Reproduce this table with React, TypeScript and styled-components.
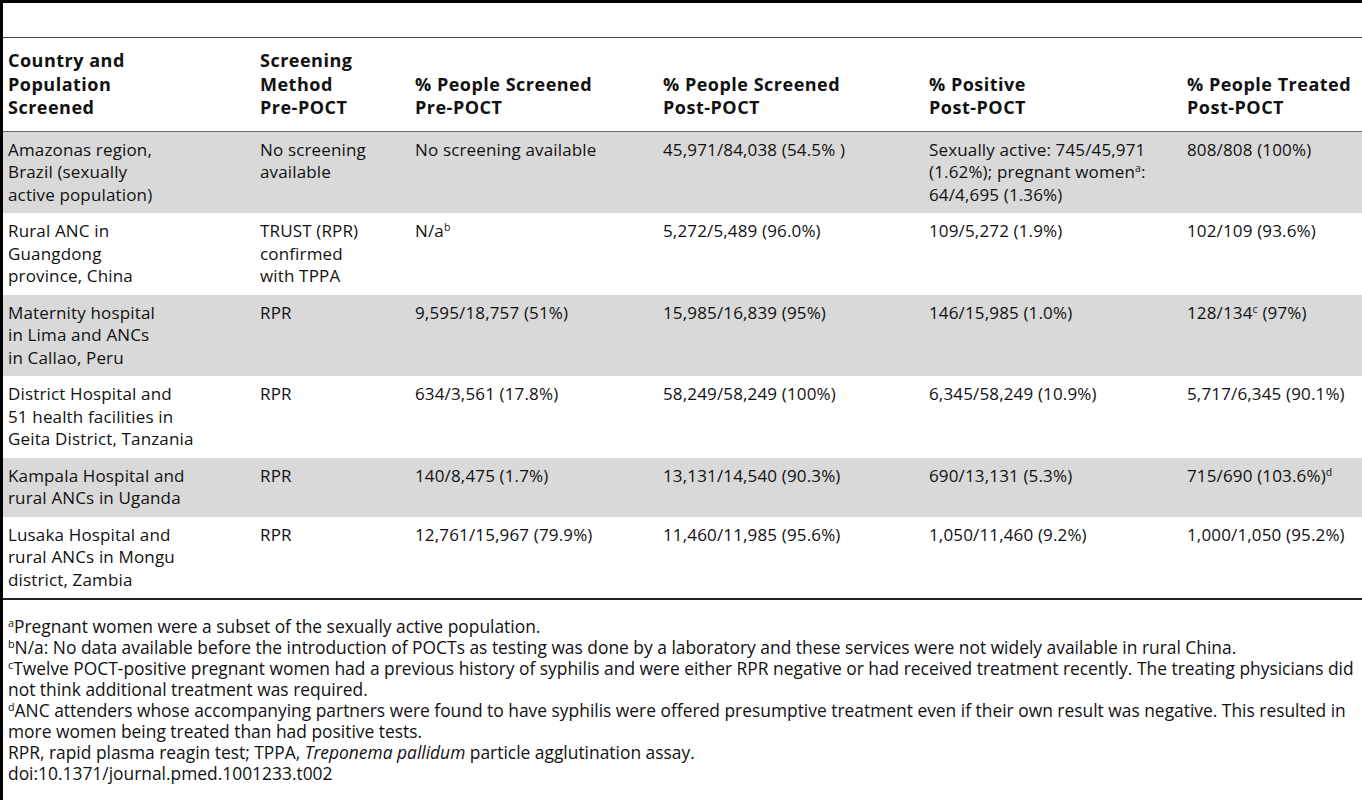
import React from "react"
import styled, { createGlobalStyle } from "styled-components"

//------------------------------
// Styles
//------------------------------
const GlobalStyle = createGlobalStyle`
  html, body {
    margin: 0;
    padding: 0;
    background: #fff;
  }
  body {
    font-family: "Open Sans", "Noto Sans", sans-serif;
    color: #111;
  }
`

const Page = styled.div`
  display: flex;
  flex-direction: column;
  width: 1362px;
  min-height: 800px;
  box-sizing: border-box;
  border-top: 3px solid #000;
  border-left: 3px solid #000;
  overflow: hidden;
`

const Caption = styled.div`
  height: 34px;
  border-bottom: 1px solid #444;
`

const Table = styled.table`
  width: 100%;
  table-layout: fixed;
  border-collapse: collapse;
  font-size: 17px;
  border-bottom: 2px solid #222;
`

const Th = styled.th`
  text-align: left;
  vertical-align: bottom;
  font-size: 18px;
  font-weight: 700;
  letter-spacing: 0.5px;
  line-height: 23.5px;
  padding: 11px 5px 11px 5px;
  border-bottom: 1px solid #666;
  white-space: nowrap;
`

const Tr = styled.tr<{ $shaded: boolean }>`
  background: ${(p) => (p.$shaded ? "#d9d9d9" : "#fff")};
`

const Td = styled.td`
  text-align: left;
  vertical-align: top;
  line-height: 22.5px;
  letter-spacing: 0.15px;
  padding: 7px 5px 7px 5px;
  white-space: nowrap;
`

const Sup = styled.sup`
  font-size: 0.62em;
  line-height: 0;
  vertical-align: 0.55em;
`

const Notes = styled.div`
  display: flex;
  flex-direction: column;
  padding: 16px 0 0 5px;
  font-size: 17.4px;
  line-height: 21px;
`

const Note = styled.div`
  em {
    font-style: italic;
  }
`

//------------------------------
// Data
//------------------------------
type Row = {
  place: string[]
  method: string[]
  pre: React.ReactNode
  post: string
  positive: React.ReactNode
  treated: React.ReactNode
}

const rows: Row[] = [
  {
    place: ["Amazonas region,", "Brazil (sexually", "active population)"],
    method: ["No screening", "available"],
    pre: "No screening available",
    post: "45,971/84,038 (54.5% )",
    positive: (
      <>
        Sexually active: 745/45,971
        <br />
        (1.62%); pregnant women<Sup>a</Sup>:
        <br />
        64/4,695 (1.36%)
      </>
    ),
    treated: "808/808 (100%)",
  },
  {
    place: ["Rural ANC in", "Guangdong", "province, China"],
    method: ["TRUST (RPR)", "confirmed", "with TPPA"],
    pre: (
      <>
        N/a<Sup>b</Sup>
      </>
    ),
    post: "5,272/5,489 (96.0%)",
    positive: "109/5,272 (1.9%)",
    treated: "102/109 (93.6%)",
  },
  {
    place: ["Maternity hospital", "in Lima and ANCs", "in Callao, Peru"],
    method: ["RPR"],
    pre: "9,595/18,757 (51%)",
    post: "15,985/16,839 (95%)",
    positive: "146/15,985 (1.0%)",
    treated: (
      <>
        128/134<Sup>c</Sup> (97%)
      </>
    ),
  },
  {
    place: ["District Hospital and", "51 health facilities in", "Geita District, Tanzania"],
    method: ["RPR"],
    pre: "634/3,561 (17.8%)",
    post: "58,249/58,249 (100%)",
    positive: "6,345/58,249 (10.9%)",
    treated: "5,717/6,345 (90.1%)",
  },
  {
    place: ["Kampala Hospital and", "rural ANCs in Uganda"],
    method: ["RPR"],
    pre: "140/8,475 (1.7%)",
    post: "13,131/14,540 (90.3%)",
    positive: "690/13,131 (5.3%)",
    treated: (
      <>
        715/690 (103.6%)<Sup>d</Sup>
      </>
    ),
  },
  {
    place: ["Lusaka Hospital and", "rural ANCs in Mongu", "district, Zambia"],
    method: ["RPR"],
    pre: "12,761/15,967 (79.9%)",
    post: "11,460/11,985 (95.6%)",
    positive: "1,050/11,460 (9.2%)",
    treated: "1,000/1,050 (95.2%)",
  },
]

const lines = (parts: string[]) =>
  parts.map((p, i) => (
    <React.Fragment key={i}>
      {i > 0 && <br />}
      {p}
    </React.Fragment>
  ))

//------------------------------
// Main
//------------------------------
export default function App() {
  return (
    <Page>
      <GlobalStyle />
      <Caption />
      <Table>
        <colgroup>
          <col style={{ width: 252 }} />
          <col style={{ width: 155 }} />
          <col style={{ width: 248 }} />
          <col style={{ width: 266 }} />
          <col style={{ width: 258 }} />
          <col />
        </colgroup>
        <thead>
          <tr>
            <Th>
              Country and
              <br />
              Population
              <br />
              Screened
            </Th>
            <Th>
              Screening
              <br />
              Method
              <br />
              Pre-POCT
            </Th>
            <Th>
              % People Screened
              <br />
              Pre-POCT
            </Th>
            <Th>
              % People Screened
              <br />
              Post-POCT
            </Th>
            <Th>
              % Positive
              <br />
              Post-POCT
            </Th>
            <Th>
              % People Treated
              <br />
              Post-POCT
            </Th>
          </tr>
        </thead>
        <tbody>
          {rows.map((r, i) => (
            <Tr key={i} $shaded={i % 2 === 0}>
              <Td>{lines(r.place)}</Td>
              <Td>{lines(r.method)}</Td>
              <Td>{r.pre}</Td>
              <Td>{r.post}</Td>
              <Td>{r.positive}</Td>
              <Td>{r.treated}</Td>
            </Tr>
          ))}
        </tbody>
      </Table>
      <Notes>
        <Note>
          <Sup>a</Sup>Pregnant women were a subset of the sexually active population.
        </Note>
        <Note>
          <Sup>b</Sup>N/a: No data available before the introduction of POCTs as testing was done by a
          laboratory and these services were not widely available in rural China.
        </Note>
        <Note>
          <Sup>c</Sup>Twelve POCT-positive pregnant women had a previous history of syphilis and were
          either RPR negative or had received treatment recently. The treating physicians did not
          think additional treatment was required.
        </Note>
        <Note>
          <Sup>d</Sup>ANC attenders whose accompanying partners were found to have syphilis were offered
          presumptive treatment even if their own result was negative. This resulted in more women
          being treated than had positive tests.
        </Note>
        <Note>
          RPR, rapid plasma reagin test; TPPA, <em>Treponema pallidum</em> particle agglutination assay.
        </Note>
        <Note>doi:10.1371/journal.pmed.1001233.t002</Note>
      </Notes>
    </Page>
  )
}
